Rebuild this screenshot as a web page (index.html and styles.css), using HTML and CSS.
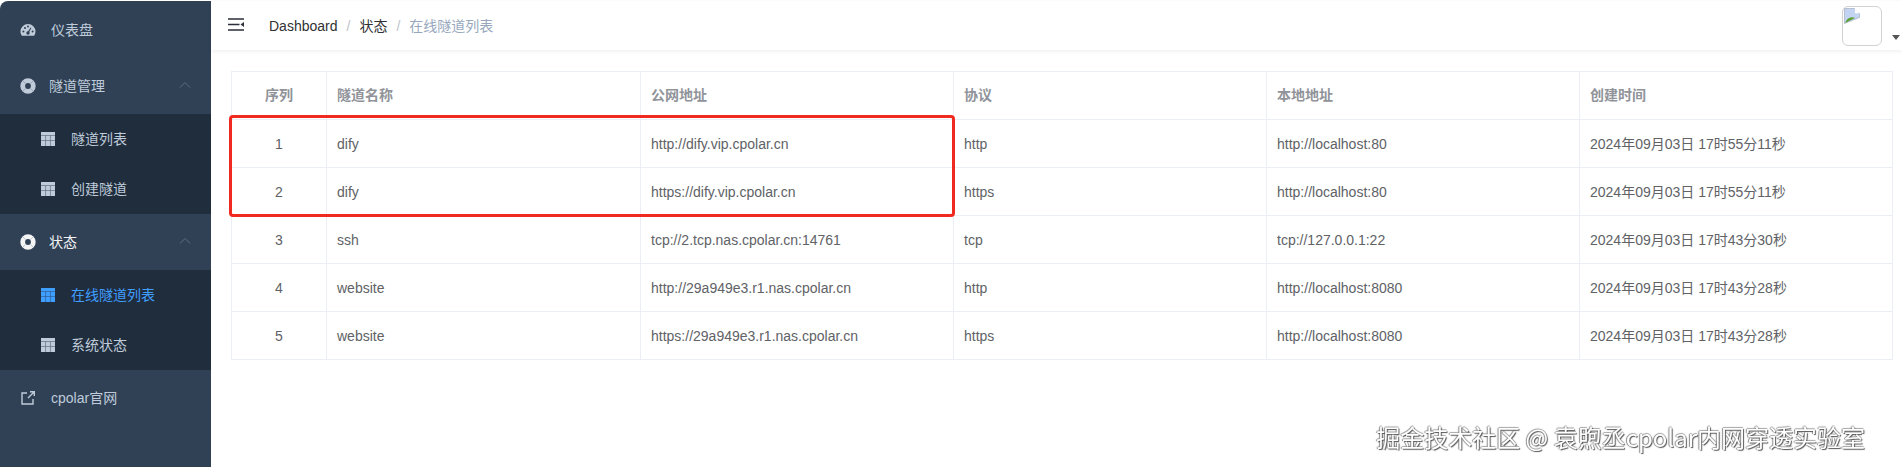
FILE: index.html
```html
<!DOCTYPE html>
<html lang="zh">
<head>
<meta charset="utf-8">
<title>在线隧道列表</title>
<link rel="stylesheet" href="styles.css">
</head>
<body>
<div class="app">
  <aside class="sidebar">
    <a class="item top"><svg class="ic" viewBox="0 0 16 16"><path fill="#bfcbd9" d="M8 2a7.500 7.500 0 0 0-7.500 7.500c0 1.700.5 3.100 1.400 4.200h12.200a7.500 7.500 0 0 0 1.400-4.200A7.500 7.500 0 0 0 8 2z"/><g fill="#304156"><circle cx="3.400" cy="9.400" r="1"/><circle cx="5" cy="6" r="1"/><circle cx="8" cy="4.600" r="1"/><circle cx="12.600" cy="9.400" r="1"/><circle cx="8" cy="11" r="1.700"/><path d="M7.300 10.600 10.600 5.600l.8.5-3 5.200z"/></g></svg><span class="lbl">仪表盘</span></a>
    <a class="item group"><svg class="ic ring" viewBox="0 0 16 16"><circle cx="8" cy="8" r="5.300" fill="none" stroke="#bfcbd9" stroke-width="4.800"/><path stroke="#6c7b8e" stroke-width=".5" d="M2.500 2.500l3 3M13.500 2.500l-3 3M2.500 13.500l3-3M13.500 13.500l-3-3"/></svg><span class="lbl tight">隧道管理</span><svg class="chev" viewBox="0 0 12 8"><path d="M1 6.500 6 1.500l5 5" fill="none" stroke="#5d6d80" stroke-width="1"/></svg></a>
    <div class="sub">
      <a class="subitem"><svg class="grid" viewBox="0 0 14 14"><path fill="#bfcbd9" d="M0 0h14v14H0z"/><path stroke="#5f6f82" stroke-width=".7" d="M0 3.500h14M0 8.500h14M4.600 3.500V14M9.400 3.500V14"/></svg><span>隧道列表</span></a>
      <a class="subitem"><svg class="grid" viewBox="0 0 14 14"><path fill="#bfcbd9" d="M0 0h14v14H0z"/><path stroke="#5f6f82" stroke-width=".7" d="M0 3.500h14M0 8.500h14M4.600 3.500V14M9.400 3.500V14"/></svg><span>创建隧道</span></a>
    </div>
    <a class="item group open"><svg class="ic ring" viewBox="0 0 16 16"><circle cx="8" cy="8" r="5.300" fill="none" stroke="#f4f4f5" stroke-width="4.800"/><path stroke="#8391a2" stroke-width=".5" d="M2.500 2.500l3 3M13.500 2.500l-3 3M2.500 13.500l3-3M13.500 13.500l-3-3"/></svg><span class="lbl tight">状态</span><svg class="chev" viewBox="0 0 12 8"><path d="M1 6.500 6 1.500l5 5" fill="none" stroke="#5d6d80" stroke-width="1"/></svg></a>
    <div class="sub">
      <a class="subitem active"><svg class="grid" viewBox="0 0 14 14"><path fill="#409eff" d="M0 0h14v14H0z"/><path stroke="#2a5f94" stroke-width=".7" d="M0 3.500h14M0 8.500h14M4.600 3.500V14M9.400 3.500V14"/></svg><span>在线隧道列表</span></a>
      <a class="subitem"><svg class="grid" viewBox="0 0 14 14"><path fill="#bfcbd9" d="M0 0h14v14H0z"/><path stroke="#5f6f82" stroke-width=".7" d="M0 3.500h14M0 8.500h14M4.600 3.500V14M9.400 3.500V14"/></svg><span>系统状态</span></a>
    </div>
    <a class="item"><svg class="ic" viewBox="0 0 16 16"><path fill="none" stroke="#bfcbd9" stroke-width="1.400" d="M7 3H2v11h11V9M8 8l6-6M10 1.700h4.300V6"/></svg><span class="lbl">cpolar官网</span></a>
  </aside>
  <main class="main">
    <header class="navbar">
      <svg class="burger" viewBox="0 0 16 13"><path stroke="#2b2f3a" stroke-width="1.500" d="M0 1h16M0 6.500h11.500M0 12h16"/><path fill="#2b2f3a" d="M16 4v5l-3.500-2.500z"/></svg>
      <nav class="crumbs"><span>Dashboard</span><i>/</i><span>状态</span><i>/</i><span class="cur">在线隧道列表</span></nav>
      <div class="user">
        <div class="avatar"><svg class="broken" viewBox="0 0 16 16"><path fill="#c3d4f2" stroke="#9aa5b8" stroke-width=".6" d="M.5.500h10l5 5v4L.5 15.500z"/><path fill="#5aa12f" d="M1 15c2-5 6-7 10-5z"/><path fill="#fff" d="M11 .5v4.800h4.500z"/></svg></div>
        <span class="caret"></span>
      </div>
    </header>
    <section class="content">
      <div class="tablewrap">
        <table>
          <colgroup><col class="c1"><col class="c2"><col class="c3"><col class="c4"><col class="c5"><col class="c6"></colgroup>
          <thead><tr><th class="num">序列</th><th>隧道名称</th><th>公网地址</th><th>协议</th><th>本地地址</th><th>创建时间</th></tr></thead>
          <tbody>
            <tr><td class="num">1</td><td>dify</td><td>http://dify.vip.cpolar.cn</td><td>http</td><td>http://localhost:80</td><td>2024年09月03日 17时55分11秒</td></tr>
            <tr><td class="num">2</td><td>dify</td><td>https://dify.vip.cpolar.cn</td><td>https</td><td>http://localhost:80</td><td>2024年09月03日 17时55分11秒</td></tr>
            <tr><td class="num">3</td><td>ssh</td><td>tcp://2.tcp.nas.cpolar.cn:14761</td><td>tcp</td><td>tcp://127.0.0.1:22</td><td>2024年09月03日 17时43分30秒</td></tr>
            <tr><td class="num">4</td><td>website</td><td>http://29a949e3.r1.nas.cpolar.cn</td><td>http</td><td>http://localhost:8080</td><td>2024年09月03日 17时43分28秒</td></tr>
            <tr><td class="num">5</td><td>website</td><td>https://29a949e3.r1.nas.cpolar.cn</td><td>https</td><td>http://localhost:8080</td><td>2024年09月03日 17时43分28秒</td></tr>
          </tbody>
        </table>
        <div class="highlight"></div>
      </div>
    </section>
  </main>
</div>
<div class="watermark">掘金技术社区 @ 袁煦丞cpolar内网穿透实验室</div>
</body>
</html>
```
FILE: styles.css
```css
* { box-sizing: border-box; }
html, body { margin: 0; height: 100%; overflow: hidden; background: #fff; }
body { font-family: "Liberation Sans", "Noto Sans CJK SC", sans-serif; font-size: 14px; line-height: 20px; color: #606266; }
.app { display: flex; height: 467px; padding-top: 1px; }
.sidebar { width: 211px; flex: none; background: #304156; border-top-left-radius: 8px; padding-top: 1px; }
.item { display: flex; align-items: center; height: 56px; padding-left: 20px; color: #bfcbd9; position: relative; }
.item.open { color: #f4f4f5; }
.ic { width: 16px; height: 16px; flex: none; }
.lbl { margin-left: 15px; }
.lbl.tight { margin-left: 13px; }
.chev { position: absolute; right: 20px; top: 23px; width: 12px; height: 8px; }
.sub { background: #1f2d3d; }
.subitem { display: flex; align-items: center; height: 50px; padding-left: 41px; color: #bfcbd9; }
.subitem span { margin-left: 16px; }
.subitem.active { color: #409eff; }
.grid { width: 14px; height: 14px; flex: none; }
.main { flex: 1; min-width: 0; display: flex; flex-direction: column; }
.navbar { height: 49px; flex: none; display: flex; align-items: center; padding-left: 17px; box-shadow: 0 1px 4px rgba(0,21,41,.08); }
.burger { width: 16px; height: 13px; margin-top: -3px; }
.crumbs { margin-left: 25px; display: flex; align-items: center; color: #303133; }
.crumbs i { font-style: normal; color: #c0c4cc; margin: 0 9px; }
.crumbs .cur { color: #97a8be; }
.user { margin-left: auto; display: flex; align-items: flex-end; padding-right: 2px; }
.avatar { width: 40px; height: 40px; border: 1px solid #d2d2d2; border-radius: 6px; padding: 1px; }
.broken { display: block; width: 16px; height: 16px; }
.caret { width: 0; height: 0; border: 4px solid transparent; border-top: 5px solid #555; border-bottom: 0; margin: 0 0 6px 10px; }
.content { padding: 21px 9px 0 20px; }
.tablewrap { position: relative; }
table { border-collapse: collapse; table-layout: fixed; width: 100%; font-size: 14px; }
.c1 { width: 95px; }
.c2 { width: 314px; }
.c3, .c4, .c5 { width: 313px; }
th, td { border: 1px solid #ebeef5; height: 48px; padding: 0 10px; text-align: left; font-weight: 400; }
th { color: #909399; font-weight: 700; padding-bottom: 2px; }
.num { text-align: center; }
.highlight { position: absolute; left: -2px; top: 44px; width: 726px; height: 102px; border: 3px solid #f02a1f; border-radius: 4px; }
.watermark { position: fixed; right: 37px; bottom: 14px; font-size: 24px; line-height: 32px; color: #fff; text-shadow: 1px 1px 1px #555, -1px 0 1px #888, 0 -1px 1px #aaa; font-family: "Noto Sans CJK SC", sans-serif; }
```
